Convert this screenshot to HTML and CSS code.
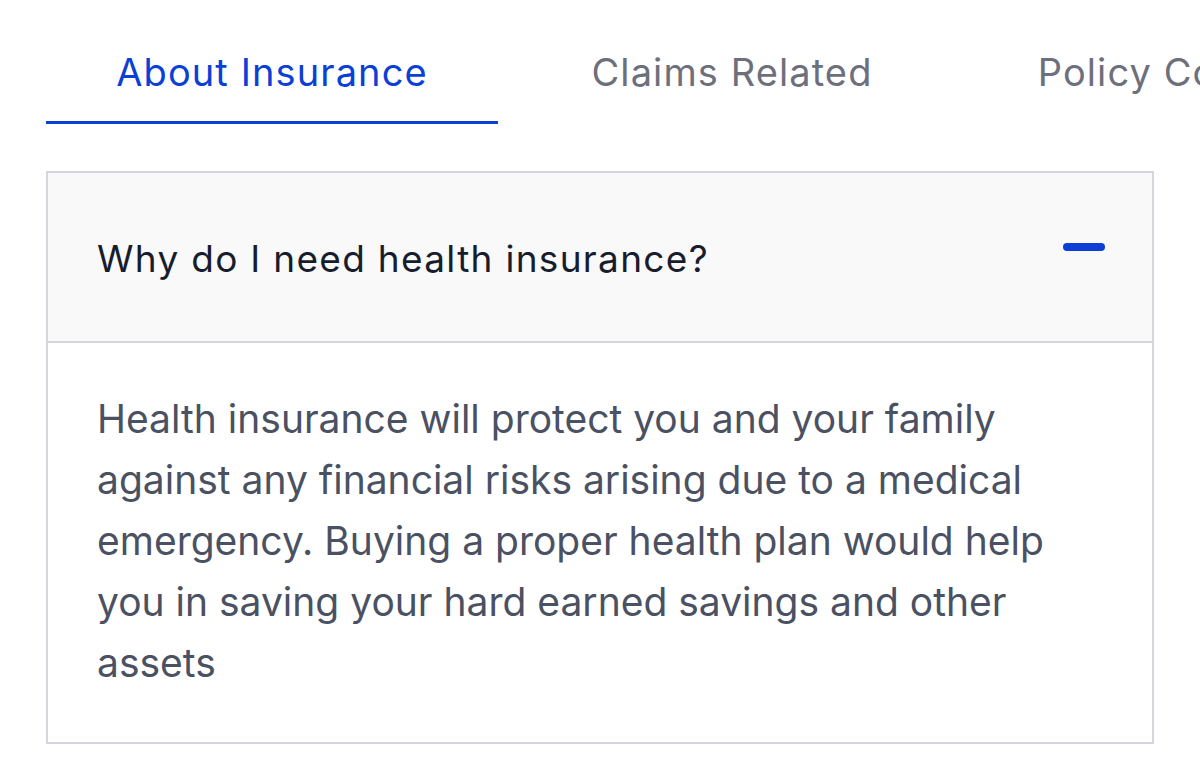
FILE: index.html
```html
<!DOCTYPE html>
<html lang="en">
<head>
<meta charset="utf-8">
<title>FAQ</title>
<link rel="stylesheet" href="styles.css">
</head>
<body>
<div class="page">
  <nav class="tabs">
    <div class="tab active">About Insurance</div>
    <div class="tab">Claims Related</div>
    <div class="tab">Policy Coverage</div>
  </nav>
  <section class="accordion">
    <div class="acc-header">
      <h2 class="question">Why do I need health insurance?</h2>
      <span class="minus"></span>
    </div>
    <div class="acc-body">
      <p class="answer">Health insurance will protect you and your family against any financial risks arising due to a medical emergency. Buying a proper health plan would help you in saving your hard earned savings and other assets</p>
    </div>
  </section>
</div>
</body>
</html>
```
FILE: styles.css
```css
html, body {
  margin: 0;
  padding: 0;
  background: #ffffff;
  overflow: hidden;
}
body {
  font-family: Inter, "Noto Sans", sans-serif;
}
.page {
  width: 1200px;
  height: 781px;
  overflow: hidden;
  padding-left: 46px;
  box-sizing: border-box;
}
.tabs {
  display: flex;
  gap: 8px;
  width: 2000px;
}
.tab {
  flex: 0 0 452px;
  text-align: center;
  font-size: 38px;
  line-height: 48px;
  padding: 48px 0 25px;
  color: #6d6f7c;
  border-bottom: 3px solid transparent;
  letter-spacing: 1.1px;
  white-space: nowrap;
}
.tab.active {
  color: #0b3fd6;
  border-bottom-color: #0b3fd6;
}
.accordion {
  margin-top: 47px;
  width: 1108px;
  box-sizing: border-box;
  border: 2px solid #d5d6dc;
}
.acc-header {
  display: flex;
  align-items: flex-start;
  justify-content: space-between;
  background: #f9f9fa;
  padding: 64px 47px 60px 49px;
  border-bottom: 2px solid #d5d6dc;
}
.question {
  margin: 0;
  font-size: 37px;
  line-height: 44px;
  font-weight: 400;
  color: #181d2d;
  letter-spacing: 1.3px;
}
.minus {
  flex: 0 0 42px;
  height: 8px;
  margin-top: 6px;
  border-radius: 4px;
  background: #0b3fd6;
}
.acc-body {
  padding: 45px 47px 49px 49px;
}
.answer {
  margin: 0;
  font-size: 39px;
  line-height: 61px;
  color: #4a5162;
  letter-spacing: 0;
}
```
